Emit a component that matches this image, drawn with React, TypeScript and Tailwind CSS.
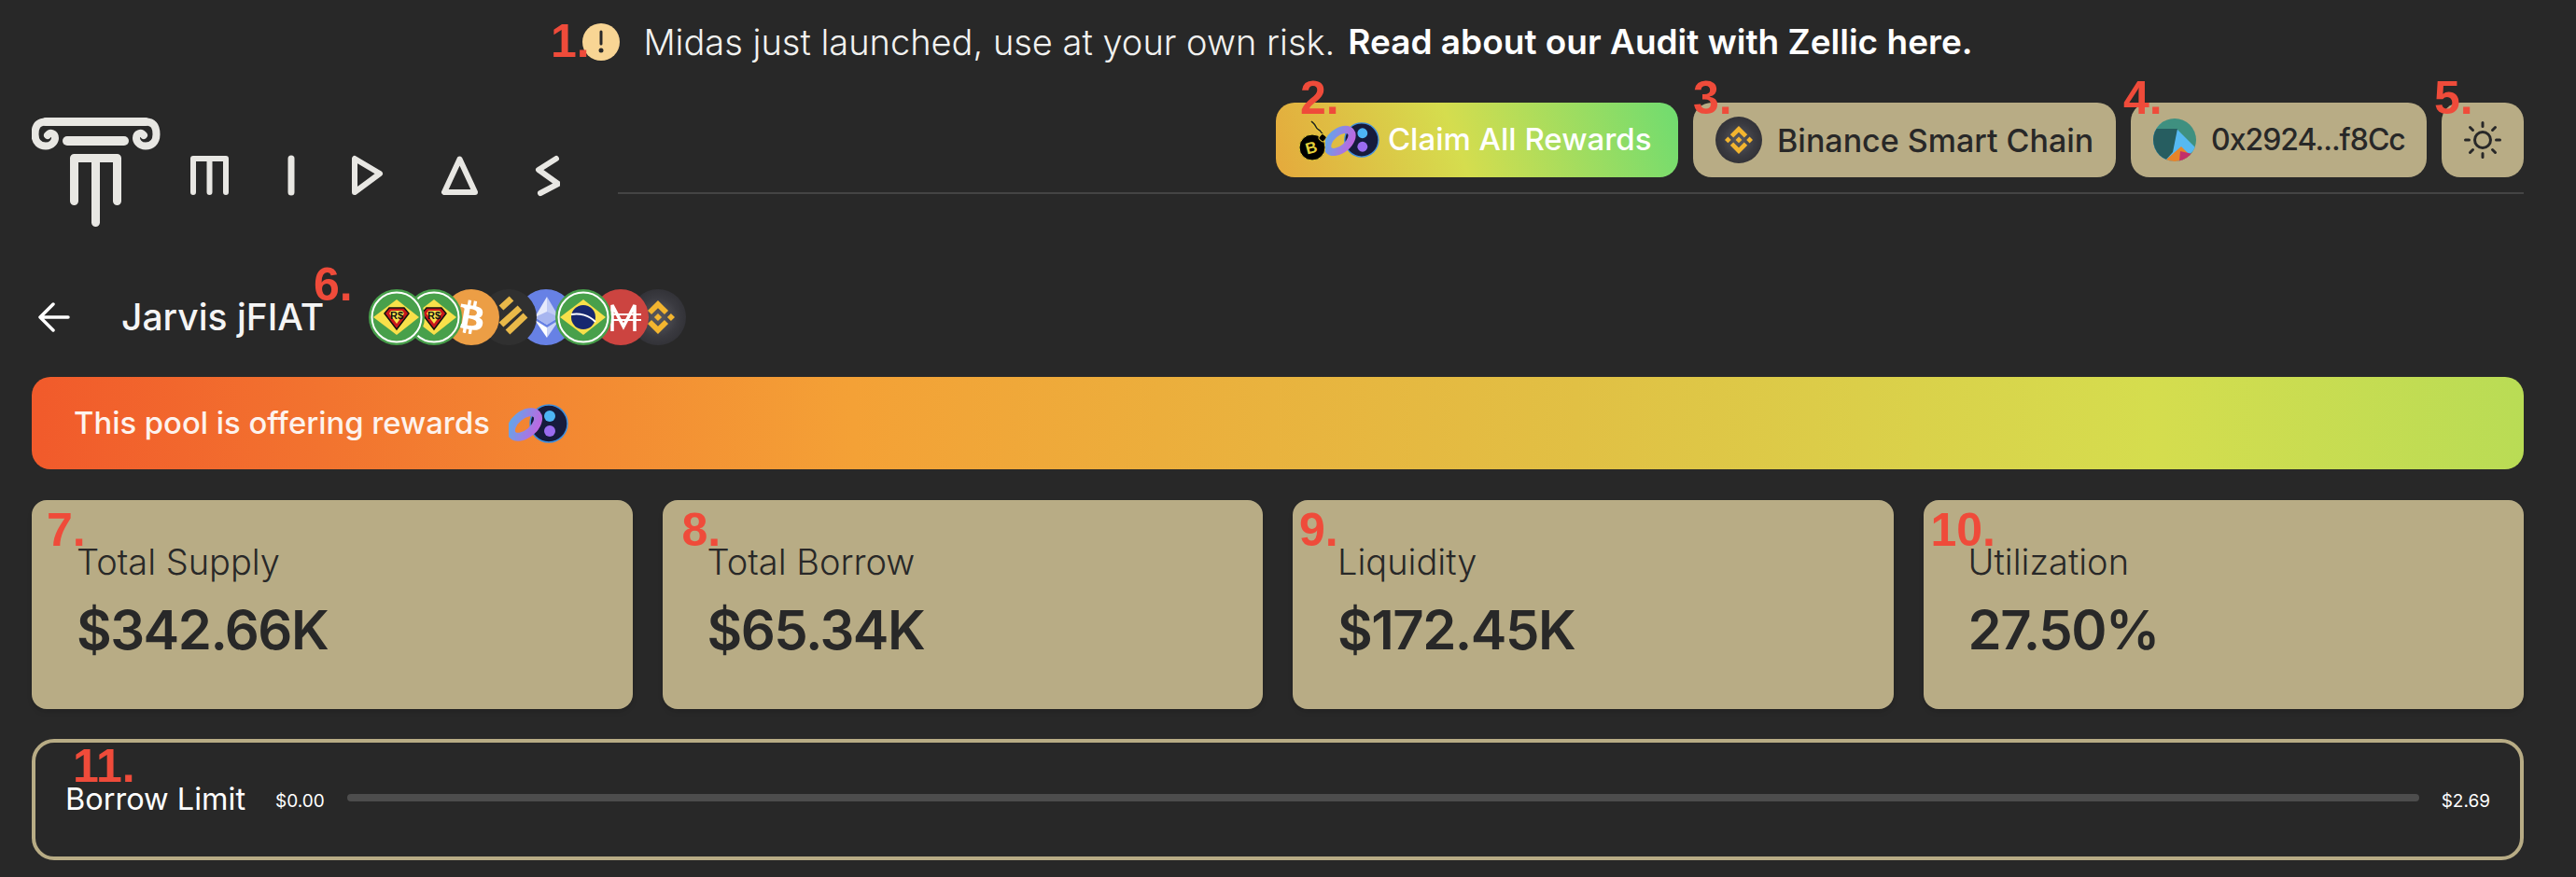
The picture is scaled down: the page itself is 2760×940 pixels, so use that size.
import { FaBtc } from "react-icons/fa";
import { SiBinance } from "react-icons/si";

const Num = ({ text, className }: { text: string; className: string }) => (
  <span className={`absolute mt-[7px] font-['Liberation_Sans',sans-serif] font-bold text-[50px] leading-[36px] text-[#ef4b3a] z-20 ${className}`}>
    {text}
  </span>
);

const Logo = () => (
  <svg width="566" height="118" viewBox="0 0 566 118" fill="none" stroke="#e8e7e3" strokeLinecap="round" strokeLinejoin="round">
    <path d="M15 4.500C5 4.500 3.500 12 3.500 18C3.500 27 9 30.500 15 30.500C22 30.500 25 25 25 22C25 17 20 15 17 19" strokeWidth="8" />
    <path d="M122 4.500C132 4.500 133.500 12 133.500 18C133.500 27 128 30.500 122 30.500C115 30.500 112 25 112 22C112 17 117 15 120 19" strokeWidth="8" />
    <path d="M15 4.500H122" strokeWidth="9" />
    <path d="M38 25H99" strokeWidth="10" />
    <path d="M45.500 89.500V43.500H91.500V89.500M68.500 43.500V112.500" strokeWidth="9" />
    <path d="M173 80V44H208V80M190.500 44V80" strokeWidth="6" />
    <path d="M278 44V80" strokeWidth="7" />
    <path d="M346 44V80L373 60Z" strokeWidth="6" />
    <path d="M458.500 44.500L442 80H475Z" strokeWidth="6" />
    <path d="M562 44L543 56L564 71L545 81" strokeWidth="6" />
  </svg>
);

const RingCoin = ({ size }: { size: number }) => (
  <svg width={(size * 64) / 42} height={size} viewBox="0 0 64 42">
    <defs>
      <linearGradient id="ring" x1="0" y1="1" x2="1" y2="0">
        <stop offset="0" stopColor="#5fa8e8" />
        <stop offset="1" stopColor="#c264e0" />
      </linearGradient>
    </defs>
    <circle cx="43" cy="21" r="20" fill="#161b3c" stroke="#3d8fe0" strokeWidth="1.500" />
    <circle cx="44" cy="13" r="6" fill="#4db4f5" />
    <circle cx="44" cy="29" r="6" fill="#9a6cf0" />
    <ellipse cx="17" cy="22" rx="10" ry="17" transform="rotate(50 17 22)" fill="none" stroke="url(#ring)" strokeWidth="9" />
  </svg>
);

const Bomb = () => (
  <svg width="34" height="46" viewBox="0 0 34 46">
    <path d="M26 21c2-3-2-5-3-7s-4-2-5-5-3-4-5-6" fill="none" stroke="#e5c93b" strokeWidth="4" />
    <path d="M26 21c2-3-2-5-3-7s-4-2-5-5-3-4-5-6" fill="none" stroke="#222" strokeWidth="1.500" />
    <circle cx="14" cy="31" r="14" fill="#000" stroke="#e5c93b" strokeWidth="1" />
    <rect x="22" y="17" width="7" height="7" rx="2" transform="rotate(40 25 20)" fill="#000" stroke="#e5c93b" />
    <text x="13" y="37" textAnchor="middle" fontSize="17" fontWeight="700" fill="#e5d13b" fontFamily="Liberation Sans, sans-serif" transform="rotate(-15 13 31)">B</text>
  </svg>
);

const BrlCoin = ({ crest }: { crest: boolean }) => (
  <svg width="60" height="60" viewBox="0 0 60 60">
    <circle cx="30" cy="30" r="30" fill="#48a04b" />
    <circle cx="30" cy="30" r="26.500" fill="none" stroke="#fff" strokeWidth="2" />
    <path d="M30 11L54 30L30 49L5 30Z" fill="#f8e04a" />
    {crest ? (
      <>
        <path d="M17 26L22 20H38L43 26L30 43Z" fill="#c8161b" stroke="#111" strokeWidth="1.500" />
        <path d="M22 26L24 23H36L38 26L30 37Z" fill="#f8e04a" />
        <text x="30" y="32" textAnchor="middle" fontSize="11" fontWeight="700" fill="#111" fontFamily="Liberation Sans, sans-serif">R$</text>
      </>
    ) : (
      <>
        <circle cx="30" cy="30" r="13" fill="#17286f" />
        <path d="M17 27C26 25 36 28 43 35" stroke="#fff" strokeWidth="2" fill="none" />
      </>
    )}
  </svg>
);

const EthCoin = () => (
  <svg width="60" height="60" viewBox="0 0 60 60">
    <circle cx="30" cy="30" r="30" fill="#6781e5" />
    <path d="M31 8L18 30L31 38Z" fill="#e6eafb" />
    <path d="M31 8L44 30L31 38Z" fill="#c0cbf5" />
    <path d="M18 30L31 24L44 30L31 38Z" fill="#a8b6f0" />
    <path d="M18 33L31 52V41Z" fill="#fff" />
    <path d="M44 33L31 52V41Z" fill="#c9d3f6" />
  </svg>
);

const MaiCoin = () => (
  <svg width="60" height="60" viewBox="0 0 60 60">
    <circle cx="30" cy="30" r="30" fill="#cc4440" />
    <path d="M21 45V17L33 40L45 17V45" fill="none" stroke="#fff" strokeWidth="3.500" />
    <path d="M14 27H52M14 33H52" stroke="#fff" strokeWidth="2" />
  </svg>
);

const Coin = ({ z, children }: { z: string; children: React.ReactNode }) => (
  <div className={`relative w-[60px] h-[60px] -ml-[20px] first:ml-0 rounded-full ${z}`}>{children}</div>
);

const BnbCoin = ({ size, icon }: { size: string; icon: number }) => (
  <div className={`${size} rounded-full bg-[radial-gradient(circle,#5c5c62_0%,#3a3a40_50%,#28282c_100%)] flex items-center justify-center`}>
    <SiBinance size={icon} color="#f3b52f" />
  </div>
);

const NavButton = ({ className, children }: { className: string; children: React.ReactNode }) => (
  <div className={`h-[80px] rounded-[20px] bg-[#b8ac85] flex items-center text-[#282828] ${className}`}>{children}</div>
);

const stats = [
  { n: "7.", nClass: "left-[16px] top-[7px]", label: "Total Supply", value: "$342.66K" },
  { n: "8.", nClass: "left-[21px] top-[7px]", label: "Total Borrow", value: "$65.34K" },
  { n: "9.", nClass: "left-[7px] top-[7px]", label: "Liquidity", value: "$172.45K" },
  { n: "10.", nClass: "left-[8px] top-[7px]", label: "Utilization", value: "27.50%" },
];

export default function App() {
  return (
    <div className="w-[2760px] h-[940px] overflow-hidden bg-[#282828] pl-[34px] pr-[56px] font-['Inter',sans-serif]">
      <div className="relative h-[110px] pb-[20px] flex items-center justify-center text-[#f2f2f0]">
        <Num text="1." className="left-[556px] top-[19px]" />
        <div className="w-[40px] h-[40px] rounded-full bg-[#f8d594] flex items-center justify-center text-[#282828] mr-[25px]">
          <svg width="8" height="26" viewBox="0 0 8 26">
            <path d="M4 2V15" stroke="#282828" strokeWidth="3" strokeLinecap="round" />
            <circle cx="4" cy="22" r="2.500" fill="#282828" />
          </svg>
        </div>
        <span className="text-[38px] font-light">Midas just launched, use at your own risk.</span>
        <span className="ml-[14px] text-[37px] font-semibold text-white">Read about our Audit with Zellic here.</span>
      </div>

      <div className="flex h-[133px]">
        <div className="mt-[16px]">
          <Logo />
        </div>
        <div className="ml-[62px] flex-1 h-[98px] border-b-2 border-[#444444] flex justify-end items-start gap-[16px]">
          <div className="relative">
            <Num text="2." className="left-[26px] top-[-30px]" />
            <div className="w-[431px] h-[80px] rounded-[20px] bg-[linear-gradient(70deg,#e5a93c_0%,#d5dd4e_45%,#6fdc70_100%)] flex items-center pl-[25px] text-white text-[33px] font-medium">
              <Bomb />
              <div className="-ml-[6px] flex">
                <RingCoin size={38} />
              </div>
              <span className="ml-[9px]">Claim All Rewards</span>
            </div>
          </div>
          <div className="relative">
            <Num text="3." className="left-[0px] top-[-30px]" />
            <NavButton className="w-[453px] pl-[24px] text-[34px] font-medium">
              <BnbCoin size="w-[50px] h-[50px]" icon={30} />
              <span className="ml-[16px]">Binance Smart Chain</span>
            </NavButton>
          </div>
          <div className="relative">
            <Num text="4." className="left-[-8px] top-[-30px]" />
            <NavButton className="w-[317px] pl-[24px] text-[32px] tracking-[-1px] font-medium">
              <svg width="46" height="46" viewBox="0 0 46 46" className="rounded-full">
                <rect width="46" height="46" fill="#3f9080" />
                <path d="M6 4L26 12L40 36L30 46H0V0Z" fill="#56b9f2" />
                <path d="M26 12L46 32L30 46L22 36Z" fill="#56b9f2" />
                <path d="M0 11L26 11L21 36L14 44L0 38Z" fill="#265d60" />
                <path d="M0 0L8 0L26 11L0 11Z" fill="#3f9080" />
                <path d="M14 44L30 30L40 40L30 46H14Z" fill="#e78429" />
                <path d="M29 35L42 38L32 46H28Z" fill="#c22f6a" />
              </svg>
              <span className="ml-[16px]">0x2924...f8Cc</span>
            </NavButton>
          </div>
          <div className="relative">
            <Num text="5." className="left-[-8px] top-[-30px]" />
            <NavButton className="w-[88px] justify-center">
              <svg width="40" height="40" viewBox="0 0 40 40" fill="none" stroke="#282828" strokeWidth="3" strokeLinecap="round">
                <circle cx="20" cy="20" r="8.500" />
                <path d="M20 1.500V5.500M20 34.500V38.500M1.500 20H5.500M34.500 20H38.500M6.500 6.500L9.500 9.500M30.500 30.500L33.500 33.500M6.500 33.500L9.500 30.500M30.500 9.500L33.500 6.500" />
              </svg>
            </NavButton>
          </div>
        </div>
      </div>

      <div className="relative mt-[67px] h-[60px] flex items-center">
        <svg width="34" height="34" viewBox="0 0 34 34" fill="none" stroke="#fff" strokeWidth="3.500" strokeLinecap="round" strokeLinejoin="round" className="ml-[7px]">
          <path d="M32 17H3M16 3L2 17L16 31" />
        </svg>
        <span className="ml-[55px] text-[39px] font-medium text-[#f5f5f5]">Jarvis jFIAT</span>
        <Num text="6." className="left-[302px] top-[-30px]" />
        <div className="absolute left-[361px] top-0 flex">
          <Coin z="z-[8]"><BrlCoin crest /></Coin>
          <Coin z="z-[7]"><BrlCoin crest /></Coin>
          <Coin z="z-[6]">
            <div className="w-[60px] h-[60px] rounded-full bg-[#ec9e45] flex items-center justify-center">
              <FaBtc size={36} color="#fff" className="rotate-[10deg]" />
            </div>
          </Coin>
          <Coin z="z-[5]">
            <svg width="60" height="60" viewBox="0 0 60 60">
              <circle cx="30" cy="30" r="30" fill="#303030" />
              <path d="M22 20L33 10M22 38L42 20M29 46L48 28" stroke="#e9b949" strokeWidth="7" />
            </svg>
          </Coin>
          <Coin z="z-[2]"><EthCoin /></Coin>
          <Coin z="z-[4]"><BrlCoin crest={false} /></Coin>
          <Coin z="z-[3]"><MaiCoin /></Coin>
          <Coin z="z-[1]"><BnbCoin size="w-[60px] h-[60px]" icon={36} /></Coin>
        </div>
      </div>

      <div className="mt-[34px] h-[99px] rounded-[20px] bg-[linear-gradient(88deg,#f15a2b_0%,#f4a136_33%,#e1c044_62%,#d5dd4e_85%,#b9dc55_100%)] flex items-center pl-[45px] text-[32.8px] font-medium text-[#fdf3ee]">
        <span>This pool is offering rewards</span>
        <div className="ml-[20px] flex">
          <RingCoin size={42} />
        </div>
      </div>

      <div className="mt-[33px] grid grid-cols-4 gap-[32px]">
        {stats.map((s) => (
          <div key={s.label} className="relative h-[224px] rounded-[16px] bg-[#b8ac85] pl-[48px] pt-[50px] text-[#282828] shadow-md">
            <Num text={s.n} className={s.nClass} />
            <div className="text-[38px] leading-[32px] font-light">{s.label}</div>
            <div className="mt-[21px] text-[58px] leading-[72px] tracking-[-1.5px] font-semibold">{s.value}</div>
          </div>
        ))}
      </div>

      <div className="relative mt-[32px] h-[130px] rounded-[24px] border-4 border-[#b8ac85] flex items-start pl-[32px] pr-[32px] pt-[46px] text-white">
        <Num text="11." className="left-[40px] top-[0px]" />
        <span className="text-[32.5px] leading-[30px]">Borrow Limit</span>
        <span className="ml-[32px] text-[19px] leading-[28px] mt-[3px]">$0.00</span>
        <div className="mx-[24px] flex-1 h-[8px] mt-[9px] rounded-full bg-[#4d4d4d]" />
        <span className="text-[19px] leading-[28px] mt-[3px]">$2.69</span>
      </div>
    </div>
  );
}
